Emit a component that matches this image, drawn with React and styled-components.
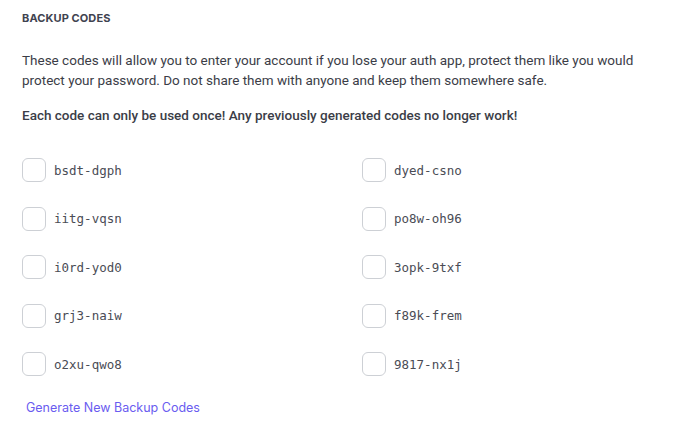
import React from "react";
import styled, { createGlobalStyle } from "styled-components";

const GlobalStyle = createGlobalStyle`
  body {
    margin: 0;
    background: #ffffff;
    font-family: Roboto, "Noto Sans", sans-serif;
  }
`;

const Section = styled.section`
  padding: 10px 22px 0 22px;
  width: 686px;
  box-sizing: border-box;
`;

const Heading = styled.h3`
  margin: 0;
  font-family: Inter, "Liberation Sans", sans-serif;
  font-size: 11px;
  font-weight: 700;
  color: #3f4350;
  letter-spacing: 0.1px;
  line-height: 16px;
`;

const Text = styled.p`
  margin: ${(p) => p.$top || 0}px 0 0 0;
  font-size: 13.5px;
  line-height: 20px;
  color: #3b3d47;
  font-weight: ${(p) => (p.$strong ? 500 : 400)};
`;

const CodeGrid = styled.div`
  display: grid;
  grid-template-columns: 340px 1fr;
  row-gap: 24.5px;
  margin-top: 33px;
`;

const CodeRow = styled.label`
  display: flex;
  align-items: center;
  gap: 8px;
  height: 24px;
`;

const Box = styled.span`
  width: 22px;
  height: 22px;
  border: 1.5px solid #cdd0d5;
  border-radius: 6px;
  box-sizing: content-box;
  flex-shrink: 0;
`;

const Code = styled.span`
  font-family: "DejaVu Sans Mono", "Liberation Mono", monospace;
  font-size: 12.5px;
  color: #4a4c55;
`;

const LinkButton = styled.button`
  margin: 24px 0 0 4px;
  padding: 0;
  border: none;
  background: none;
  font-family: Inter, "Liberation Sans", sans-serif;
  font-size: 12.5px;
  color: #6a5cf0;
  cursor: pointer;
`;

const codes = [
  ["bsdt-dgph", "dyed-csno"],
  ["iitg-vqsn", "po8w-oh96"],
  ["i0rd-yod0", "3opk-9txf"],
  ["grj3-naiw", "f89k-frem"],
  ["o2xu-qwo8", "9817-nx1j"],
];

export default function App() {
  return (
    <>
      <GlobalStyle />
      <Section>
        <Heading>BACKUP CODES</Heading>
        <Text $top={24}>
          These codes will allow you to enter your account if you lose your auth app, protect them like you would
          protect your password. Do not share them with anyone and keep them somewhere safe.
        </Text>
        <Text $top={15} $strong>
          Each code can only be used once! Any previously generated codes no longer work!
        </Text>
        <CodeGrid>
          {codes.flat().map((c) => (
            <CodeRow key={c}>
              <Box />
              <Code>{c}</Code>
            </CodeRow>
          ))}
        </CodeGrid>
        <LinkButton>Generate New Backup Codes</LinkButton>
      </Section>
    </>
  );
}
